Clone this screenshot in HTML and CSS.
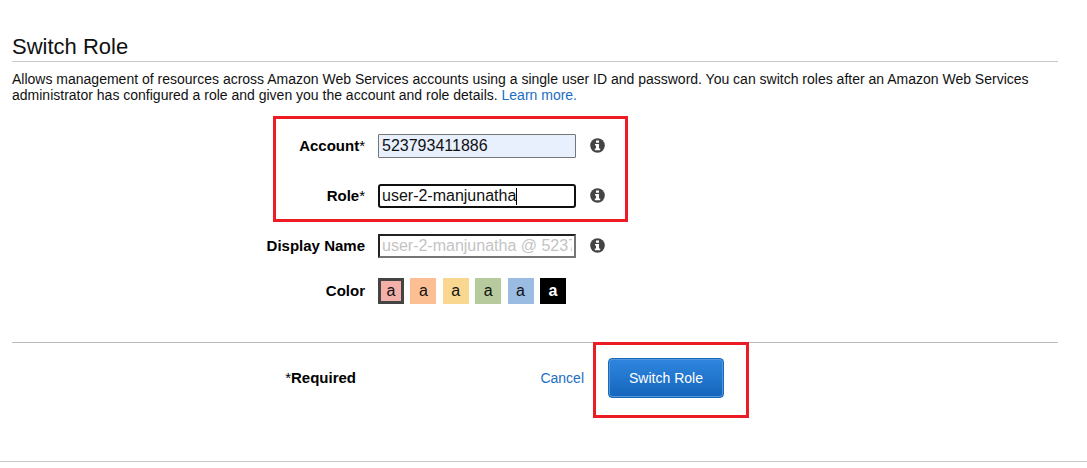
FILE: index.html
```html
<!DOCTYPE html>
<html lang="en">
<head>
<meta charset="utf-8">
<title>Switch Role</title>
<link rel="stylesheet" href="styles.css">
</head>
<body>
<svg class="sprite" aria-hidden="true">
  <symbol id="info" viewBox="0 0 15 15">
    <circle cx="7.5" cy="7.5" r="7.3" fill="#444"/>
    <path fill="#fff" d="M6 2.5h3v2.2H6zM5 6h4v4.6h1.2v1.6H4.8v-1.6H6V7.5H5z"/>
  </symbol>
</svg>
<main class="page">
  <h1 class="title">Switch Role</h1>
  <p class="intro">Allows management of resources across Amazon Web Services accounts using a single user ID and password. You can switch roles after an Amazon Web Services administrator has configured a role and given you the account and role details. <a class="link" href="#">Learn more.</a></p>
  <form class="form">
    <div class="required-fields">
      <div class="row">
        <label class="label" for="account">Account<span class="star">*</span></label>
        <div class="field"><input class="input filled" id="account" type="text" value="523793411886"></div>
        <svg class="info" role="img" aria-label="Account help"><use href="#info"/></svg>
      </div>
      <div class="row">
        <label class="label" for="role">Role<span class="star">*</span></label>
        <div class="field editing"><input class="input active" id="role" type="text" value="user-2-manjunatha"></div>
        <svg class="info" role="img" aria-label="Role help"><use href="#info"/></svg>
      </div>
    </div>
    <div class="row">
      <label class="label" for="display">Display Name</label>
      <div class="field"><input class="input inset" id="display" type="text" placeholder="user-2-manjunatha @ 523793411886"></div>
      <svg class="info" role="img" aria-label="Display name help"><use href="#info"/></svg>
    </div>
    <div class="row color-row">
      <span class="label" id="color-label">Color</span>
      <div class="swatches" role="group" aria-labelledby="color-label">
        <button class="swatch red selected" type="button">a</button>
        <button class="swatch orange" type="button">a</button>
        <button class="swatch yellow" type="button">a</button>
        <button class="swatch green" type="button">a</button>
        <button class="swatch blue" type="button">a</button>
        <button class="swatch black" type="button">a</button>
      </div>
    </div>
    <div class="actions">
      <span class="required"><span class="star">*</span>Required</span>
      <a class="link cancel" href="#">Cancel</a>
      <div class="submit-area"><button class="submit" type="submit">Switch Role</button></div>
    </div>
  </form>
</main>
<hr class="page-end">
</body>
</html>
```
FILE: styles.css
```css
*, *::before, *::after { box-sizing: border-box; }
body {
  margin: 0;
  background: #fff;
  color: #111;
  font: 14px/16px "Liberation Sans", Arial, sans-serif;
}
.sprite { position: absolute; width: 0; height: 0; }
.page { padding: 34px 29px 0 12px; }
.title {
  margin: 0;
  padding-bottom: 1px;
  border-bottom: 1px solid #c8c8c8;
  font-size: 22px;
  font-weight: 400;
  line-height: 26px;
}
.intro { margin: 9px 0 0; }
.link { color: #1b6ec2; text-decoration: none; }
.form { margin: 31px 0 0; }
.required-fields { position: relative; margin-bottom: 26px; }
.required-fields::after {
  content: "";
  position: absolute;
  top: -18px;
  left: 261px;
  width: 355px;
  height: 106px;
  border: 3px solid #ed1c24;
  pointer-events: none;
}
.row {
  display: grid;
  grid-template-columns: 353px 198px 16px;
  column-gap: 13px;
  align-items: center;
  margin-bottom: 26px;
}
.required-fields .row:last-child { margin-bottom: 0; }
.label { text-align: right; font-size: 15px; font-weight: 700; color: #000; }
.star { font-weight: 400; }
.field { position: relative; display: flex; }
.editing::after {
  content: "";
  position: absolute;
  top: 4px;
  left: 138px;
  width: 1px;
  height: 17px;
  background: #000;
}
.input {
  width: 100%;
  height: 24px;
  padding: 1px 3px;
  border: 1px solid #767676;
  border-radius: 1px;
  background: #fff;
  color: #111;
  font: 16px/18px "Liberation Sans", Arial, sans-serif;
  outline: none;
}
.filled { background: #e8f0fe; }
.active { border: 2px solid #101010; border-radius: 3px; padding: 0 2px; }
.inset {
  border: 2px solid;
  border-color: #222 #767676 #767676 #222;
  border-radius: 0;
  padding: 0 2px;
}
.input::placeholder { color: #c4c4c4; opacity: 1; }
.info { width: 15px; height: 15px; margin: 0 0 1px 1px; }
.color-row { margin: 0; }
.form > .row:not(.color-row) { margin-bottom: 20px; }
.swatches { display: flex; justify-content: space-between; width: 188px; }
.swatch {
  width: 26px;
  height: 26px;
  padding: 0;
  border: 0;
  color: #111;
  font: 16px/18px "Liberation Sans", Arial, sans-serif;
}
.red { background: #f2b0a9; }
.orange { background: #fbbf93; }
.yellow { background: #fad791; }
.green { background: #b7ca9d; }
.blue { background: #9abce3; }
.black { background: #000; color: #fff; font-weight: 700; }
.selected { border: 3px solid #444; }
.actions {
  display: flex;
  align-items: center;
  margin-top: 38px;
  padding-top: 15px;
  border-top: 1px solid #bbb;
}
.required { width: 344px; text-align: right; font-size: 15px; font-weight: 700; color: #000; }
.cancel { width: 228px; text-align: right; }
.submit-area { position: relative; margin-left: 24px; }
.submit-area::after {
  content: "";
  position: absolute;
  inset: -16px -25px -20px -15px;
  border: 3px solid #ed1c24;
  pointer-events: none;
}
.submit {
  display: block;
  width: 116px;
  height: 40px;
  padding: 0;
  border: 1px solid #1769bc;
  border-radius: 4px;
  background: linear-gradient(#2f86df, #1465ba);
  box-shadow: inset 0 0 0 1px #5597dc;
  color: #fff;
  font: 14px/16px "Liberation Sans", Arial, sans-serif;
}
.page-end { margin: 63px 0 0; border: 0; border-top: 1px solid #c8c8c8; }
```
